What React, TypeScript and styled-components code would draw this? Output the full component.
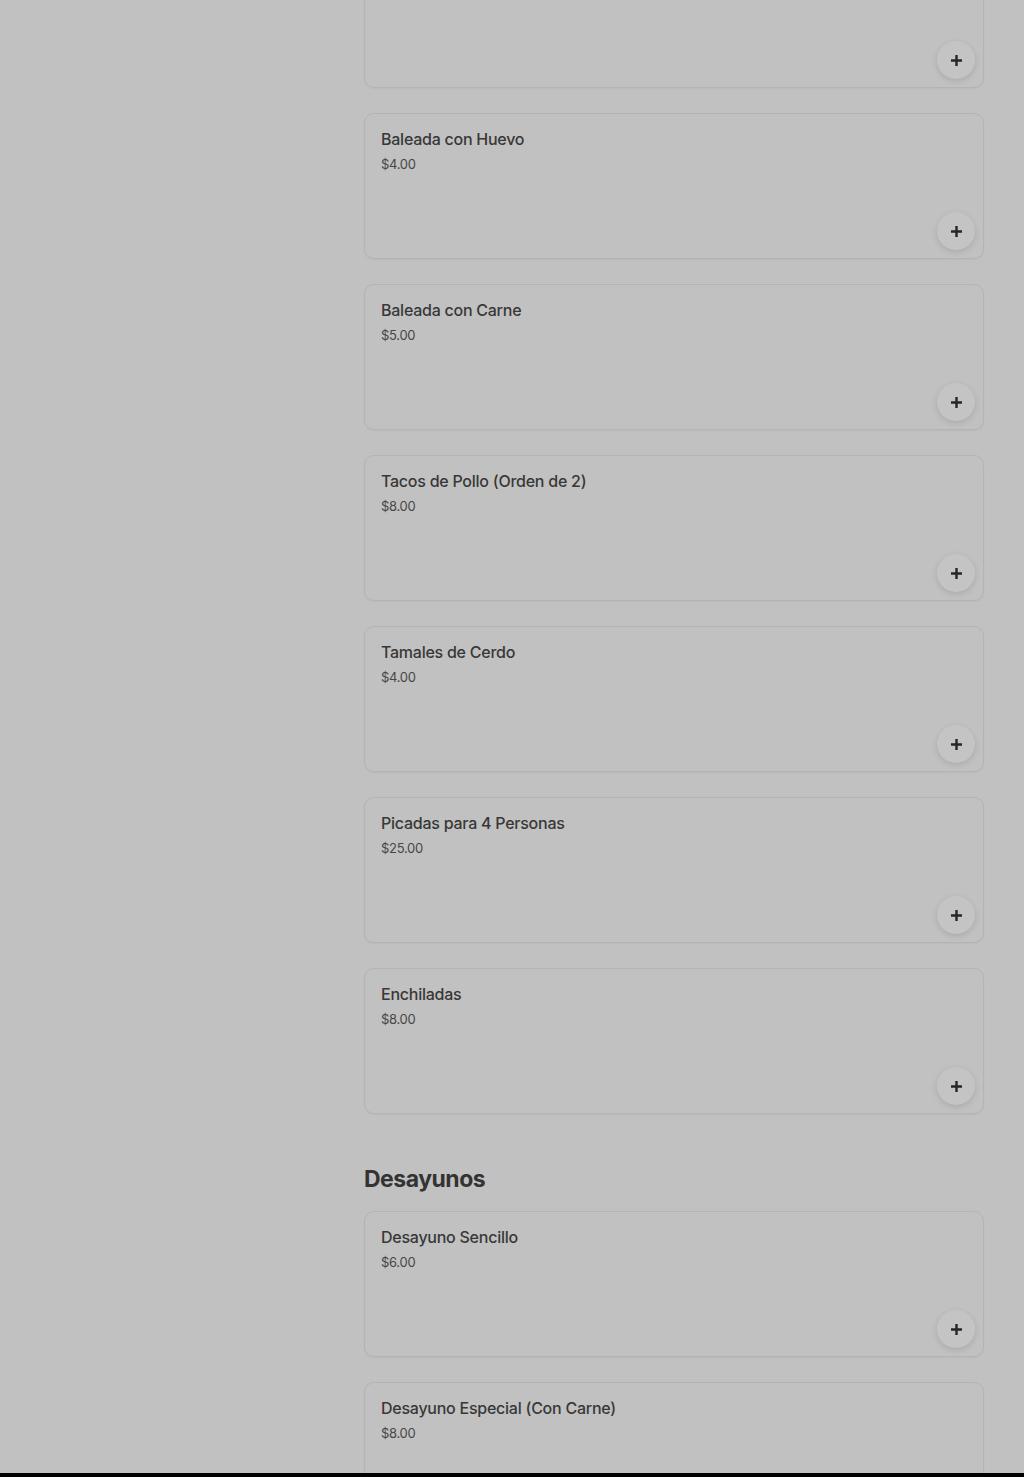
import styled, { createGlobalStyle } from 'styled-components'

type MenuItem = {
  name: string
  price: number
}

type MenuSection = {
  title?: string
  items: MenuItem[]
}

const sections: MenuSection[] = [
  {
    items: [
      { name: 'Baleada Sencilla', price: 3 },
      { name: 'Baleada con Huevo', price: 4 },
      { name: 'Baleada con Carne', price: 5 },
      { name: 'Tacos de Pollo (Orden de 2)', price: 8 },
      { name: 'Tamales de Cerdo', price: 4 },
      { name: 'Picadas para 4 Personas', price: 25 },
      { name: 'Enchiladas', price: 8 },
    ],
  },
  {
    title: 'Desayunos',
    items: [
      { name: 'Desayuno Sencillo', price: 6 },
      { name: 'Desayuno Especial (Con Carne)', price: 8 },
    ],
  },
]

const GlobalStyle = createGlobalStyle`
  html, body {
    margin: 0;
    padding: 0;
    background: #c1c1c1;
    font-family: Inter, "Noto Sans", "Liberation Sans", sans-serif;
    color: #333333;
  }
  * {
    box-sizing: border-box;
  }
`

const Page = styled.div`
  display: grid;
  grid-template-columns: 364px 620px;
  min-height: 1477px;
  overflow: hidden;
`

const Sidebar = styled.aside``

const Main = styled.main`
  display: flex;
  flex-direction: column;
  gap: 25px;
  /* page is scrolled: first card is partly above the fold */
  margin-top: -58px;
  padding-bottom: 40px;
`

const Section = styled.section`
  display: flex;
  flex-direction: column;
  gap: 25px;
`

const SectionTitle = styled.h2`
  margin: 26px 0 -7px;
  font-size: 23px;
  line-height: 28px;
  font-weight: 700;
  letter-spacing: -0.5px;
  color: #333333;
`

const Card = styled.div`
  display: flex;
  flex-direction: column;
  height: 146px;
  padding: 15px 8px 8px 16px;
  border: 1px solid #b4b4b4;
  border-radius: 10px;
  background: #c1c1c1;
  box-shadow: 0 1px 2px rgba(0, 0, 0, 0.04);
`

const ItemName = styled.div`
  font-size: 16px;
  line-height: 20px;
  font-weight: 500;
  letter-spacing: -0.25px;
  color: #383838;
`

const ItemPrice = styled.div`
  margin-top: 6px;
  font-size: 13px;
  line-height: 18px;
  color: #474747;
  letter-spacing: -0.3px;
`

const AddButton = styled.button`
  margin-top: auto;
  align-self: flex-end;
  width: 38px;
  height: 38px;
  border: none;
  border-radius: 50%;
  background: #c4c4c4;
  box-shadow: 0 2px 6px rgba(0, 0, 0, 0.12);
  display: flex;
  align-items: center;
  justify-content: center;
  padding: 0;
  cursor: pointer;
`

const BottomBar = styled.div`
  position: fixed;
  left: 0;
  right: 0;
  bottom: 0;
  height: 4px;
  background: #000000;
`

const PlusIcon = () => (
  <svg width="13" height="13" viewBox="0 0 13 13" aria-hidden>
    <path d="M6.5 1v11M1 6.5h11" stroke="#262626" strokeWidth="2.4" />
  </svg>
)

const formatPrice = (price: number) => `$${price.toFixed(2)}`

export default function App() {
  return (
    <>
      <GlobalStyle />
      <Page>
        <Sidebar />
        <Main>
          {sections.map((section, i) => (
            <Section key={i}>
              {section.title && <SectionTitle>{section.title}</SectionTitle>}
              {section.items.map((item) => (
                <Card key={item.name}>
                  <ItemName>{item.name}</ItemName>
                  <ItemPrice>{formatPrice(item.price)}</ItemPrice>
                  <AddButton aria-label={`Agregar ${item.name}`}>
                    <PlusIcon />
                  </AddButton>
                </Card>
              ))}
            </Section>
          ))}
        </Main>
      </Page>
      <BottomBar />
    </>
  )
}
